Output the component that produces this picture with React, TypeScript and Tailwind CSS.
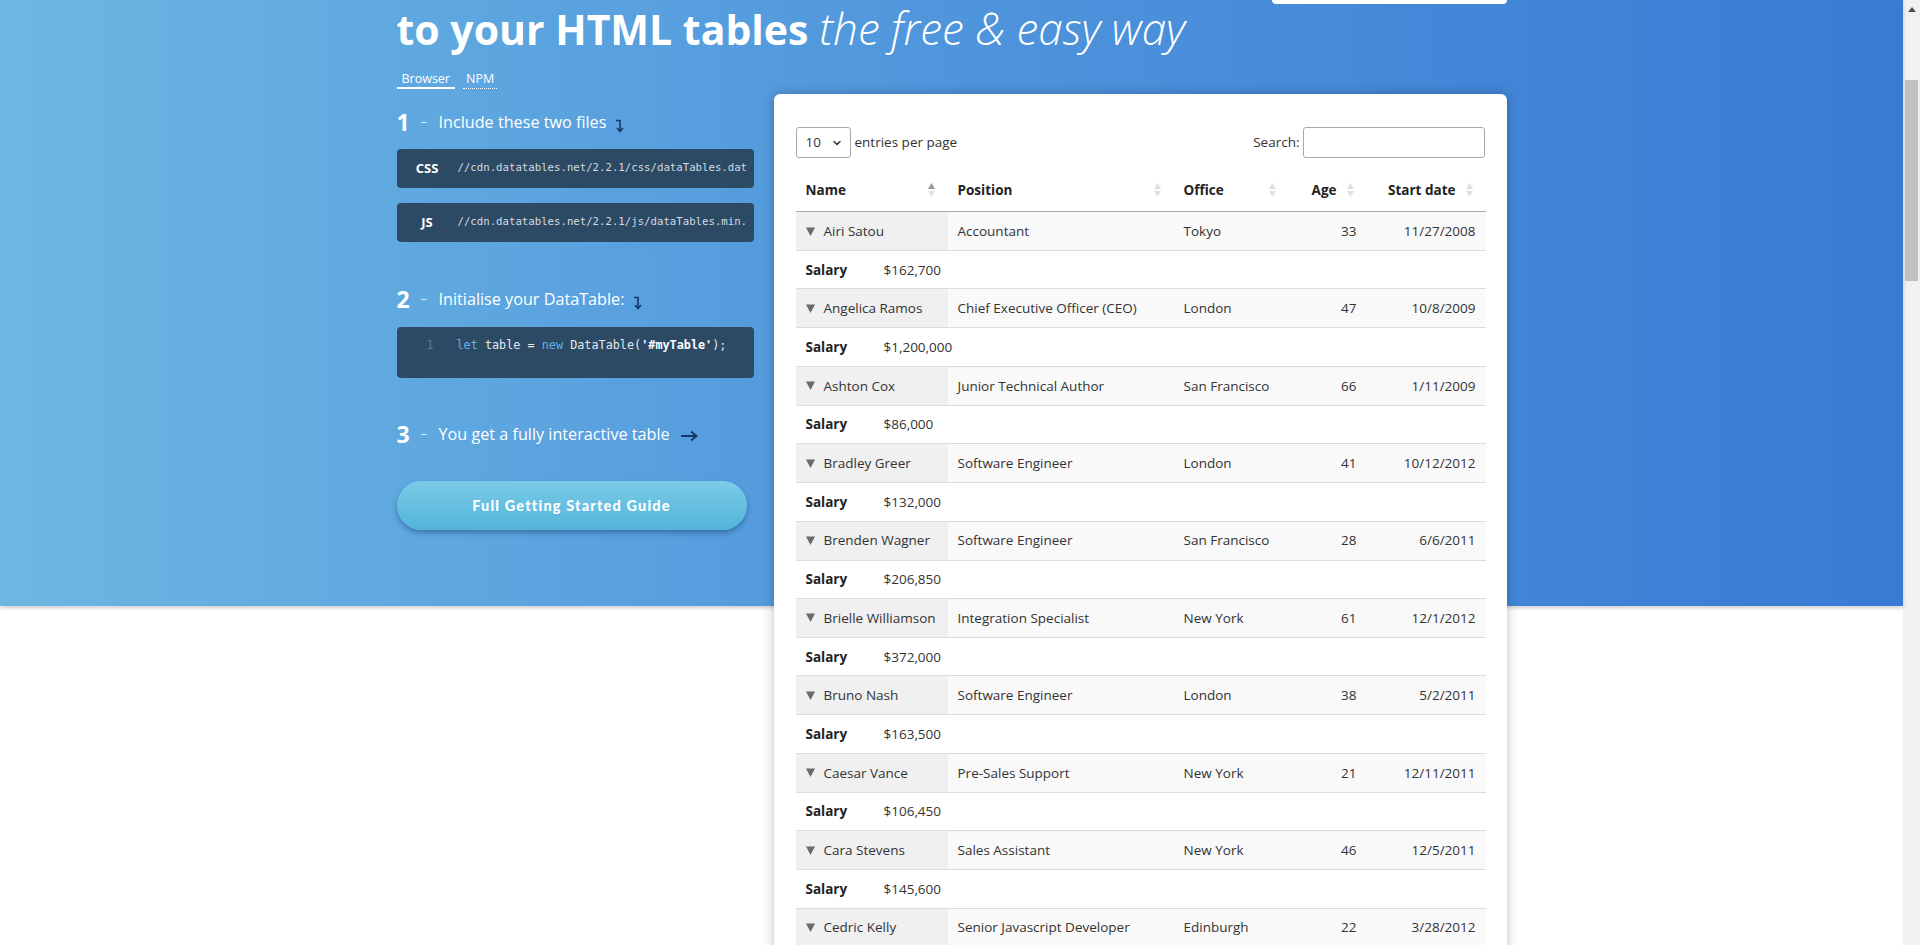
import React from 'react';
import { ChevronDown } from 'lucide-react';

type Person = {
    name: string;
    position: string;
    office: string;
    age: number;
    start: string;
    salary: string;
};

const people: Person[] = [
    { name: 'Airi Satou', position: 'Accountant', office: 'Tokyo', age: 33, start: '11/27/2008', salary: '$162,700' },
    { name: 'Angelica Ramos', position: 'Chief Executive Officer (CEO)', office: 'London', age: 47, start: '10/8/2009', salary: '$1,200,000' },
    { name: 'Ashton Cox', position: 'Junior Technical Author', office: 'San Francisco', age: 66, start: '1/11/2009', salary: '$86,000' },
    { name: 'Bradley Greer', position: 'Software Engineer', office: 'London', age: 41, start: '10/12/2012', salary: '$132,000' },
    { name: 'Brenden Wagner', position: 'Software Engineer', office: 'San Francisco', age: 28, start: '6/6/2011', salary: '$206,850' },
    { name: 'Brielle Williamson', position: 'Integration Specialist', office: 'New York', age: 61, start: '12/1/2012', salary: '$372,000' },
    { name: 'Bruno Nash', position: 'Software Engineer', office: 'London', age: 38, start: '5/2/2011', salary: '$163,500' },
    { name: 'Caesar Vance', position: 'Pre-Sales Support', office: 'New York', age: 21, start: '12/11/2011', salary: '$106,450' },
    { name: 'Cara Stevens', position: 'Sales Assistant', office: 'New York', age: 46, start: '12/5/2011', salary: '$145,600' },
    { name: 'Cedric Kelly', position: 'Senior Javascript Developer', office: 'Edinburgh', age: 22, start: '3/28/2012', salary: '$433,060' },
];

// small stacked triangles used by the sortable headers
const SortIcon: React.FC<{ asc?: boolean }> = ({ asc }) => (
    <span className="absolute right-[13px] top-1/2 -translate-y-1/2 flex flex-col gap-[2px]">
        <svg width="7" height="6" viewBox="0 0 7 6">
            <path d="M3.5 0 L7 6 L0 6 Z" fill={asc ? '#999' : '#e0e0e0'} />
        </svg>
        <svg width="7" height="6" viewBox="0 0 7 6">
            <path d="M0 0 L7 0 L3.5 6 Z" fill="#e0e0e0" />
        </svg>
    </span>
);

const DownArrow: React.FC = () => (
    <svg width="10" height="14" viewBox="0 0 10 14" className="ml-[9px] mt-[8px]">
        <path d="M1 1.5 H5 V12" stroke="#15396b" strokeWidth="1.6" fill="none" />
        <path d="M2 9 L5 12.5 L8 9" stroke="#15396b" strokeWidth="1.6" fill="none" />
    </svg>
);

const RightArrow: React.FC = () => (
    <svg width="18" height="12" viewBox="0 0 18 12" className="ml-[10px] mt-[3px]">
        <path d="M1 6 H16" stroke="#15396b" strokeWidth="2" fill="none" />
        <path d="M11 1.5 L16.5 6 L11 10.5" stroke="#15396b" strokeWidth="2" fill="none" />
    </svg>
);

const Step: React.FC<{ num: string; text: string; arrow: React.ReactNode; className?: string }> = ({ num, text, arrow, className }) => (
    <div className={`flex items-center h-[28px] text-white ${className ?? ''}`}>
        <span className="text-[23px] font-bold w-[24px]">{num}</span>
        <span className="text-[13px] text-white/80 w-[18px]">–</span>
        <span className="text-[16.2px]">{text}</span>
        {arrow}
    </div>
);

const FileBox: React.FC<{ label: string; url: string; className?: string }> = ({ label, url, className }) => (
    <div className={`flex items-center h-[39px] bg-[#2d4a64] rounded-[4px] pr-[8px] overflow-hidden ${className ?? ''}`}>
        <span className="w-[61px] shrink-0 text-center text-[13px] font-bold text-white">{label}</span>
        <span className="whitespace-nowrap text-[10.7px] text-[#d2dae2] font-['DejaVu_Sans_Mono',monospace]">{url}</span>
    </div>
);

export default function App() {
    return (
        <div className="flex h-[945px] overflow-hidden bg-white font-['Open_Sans',sans-serif]">
            <div className="flex-1 relative">
                <div className="h-[606px] bg-gradient-to-r from-[#6cb7e2] via-[#4f95dc] to-[#3a7ad4] shadow-[0_2px_4px_rgba(0,0,0,0.2)]">
                    <div className="w-[1110px] mx-auto flex gap-[20px]">
                        {/* left column */}
                        <div className="w-[357px] shrink-0 flex flex-col">
                            <h1 className="mt-[3px] text-[41px] leading-[50px] font-bold text-white whitespace-nowrap">
                                to your HTML tables{' '}
                                <span className="text-[44px] font-light italic">the free &amp; easy way</span>
                            </h1>
                            <div className="mt-[17px] flex gap-[8px] text-[12.5px] leading-[16px] text-white">
                                <span className="px-[5px] border-b-2 border-white">Browser</span>
                                <span className="px-[3px] border-b border-dotted border-white">NPM</span>
                            </div>
                            <Step className="mt-[19px]" num="1" text="Include these two files" arrow={<DownArrow />} />
                            <FileBox className="mt-[13px]" label="CSS" url="//cdn.datatables.net/2.2.1/css/dataTables.dat" />
                            <FileBox className="mt-[15px]" label="JS" url="//cdn.datatables.net/2.2.1/js/dataTables.min." />
                            <Step className="mt-[43px]" num="2" text="Initialise your DataTable:" arrow={<DownArrow />} />
                            <div className="mt-[14px] h-[51px] bg-[#2d4a64] rounded-[4px] pt-[9px] flex text-[11.8px] leading-[18px] font-['DejaVu_Sans_Mono',monospace]">
                                <span className="w-[60px] pr-[23px] text-right text-[#5d7c95]">1</span>
                                <span className="text-[#e2e8ee] whitespace-pre">
                                    <span className="text-[#62b1f0]">let</span> table = <span className="text-[#62b1f0]">new</span> DataTable(<span className="font-bold text-white">'#myTable'</span>);
                                </span>
                            </div>
                            <Step className="mt-[42px]" num="3" text="You get a fully interactive table" arrow={<RightArrow />} />
                            <button className="mt-[33px] h-[49px] w-[350px] rounded-full bg-gradient-to-b from-[#7acbe8] to-[#52b4da] shadow-[0_3px_5px_rgba(20,60,110,0.45)] text-white text-[14.5px] font-black tracking-[0.08em] font-['Lato',sans-serif]">
                                Full Getting Started Guide
                            </button>
                        </div>

                        {/* right column */}
                        <div className="w-[733px] shrink-0 flex flex-col">
                            <div className="self-end w-[235px] h-[4px] bg-white rounded-b-[6px]" />
                            <div className="mt-[90px] bg-white rounded-[6px] shadow-[0_0_12px_rgba(0,0,0,0.25)] px-[22px] pt-[33px] pb-[30px] text-[13.5px] text-[#333]">
                                <div className="flex items-center justify-between h-[31px]">
                                    <div className="flex items-center gap-[4px]">
                                        <div className="w-[55px] h-[31px] border border-[#aaa] rounded-[3px] flex items-center justify-between pl-[9px] pr-[7px]">
                                            <span>10</span>
                                            <ChevronDown size={12} strokeWidth={3} color="#333" />
                                        </div>
                                        <span>entries per page</span>
                                    </div>
                                    <div className="flex items-center gap-[3px]">
                                        <span>Search:</span>
                                        <div className="w-[182px] h-[31px] border border-[#aaa] rounded-[3px]" />
                                    </div>
                                </div>
                                <table className="mt-[11px] w-full table-fixed border-collapse">
                                    <colgroup>
                                        <col className="w-[152px]" />
                                        <col className="w-[226px]" />
                                        <col className="w-[115px]" />
                                        <col className="w-[78px]" />
                                        <col className="w-[119px]" />
                                    </colgroup>
                                    <thead>
                                        <tr className="border-b border-[#a9a9a9] text-[#222]">
                                            <th className="relative text-left font-bold py-[10px] pl-[10px] pr-[30px] leading-[22px]">Name<SortIcon asc /></th>
                                            <th className="relative text-left font-bold py-[10px] pl-[10px] pr-[30px] leading-[22px]">Position<SortIcon /></th>
                                            <th className="relative text-left font-bold py-[10px] pl-[10px] pr-[30px] leading-[22px]">Office<SortIcon /></th>
                                            <th className="relative text-right font-bold py-[10px] pl-[10px] pr-[30px] leading-[22px]">Age<SortIcon /></th>
                                            <th className="relative text-right font-bold py-[10px] pl-[10px] pr-[30px] leading-[22px] whitespace-nowrap">Start date<SortIcon /></th>
                                        </tr>
                                    </thead>
                                    <tbody>
                                        {people.map((p) => (
                                            <React.Fragment key={p.name}>
                                                <tr className="border-b border-[#dcdcdc] bg-[#f9f9f9]">
                                                    <td className="h-[39px] p-0 pl-[10px] bg-[#f0f0f0] whitespace-nowrap">
                                                        <div className="flex items-center h-[22px]">
                                                            <svg width="9" height="9" viewBox="0 0 9 9" className="mr-[9px]">
                                                                <path d="M0 0.5 L9 0.5 L4.5 9 Z" fill="#6a6a6a" />
                                                            </svg>
                                                            {p.name}
                                                        </div>
                                                    </td>
                                                    <td className="h-[39px] p-0 px-[10px] whitespace-nowrap">{p.position}</td>
                                                    <td className="h-[39px] p-0 px-[10px] whitespace-nowrap">{p.office}</td>
                                                    <td className="h-[39px] p-0 px-[10px] text-right">{p.age}</td>
                                                    <td className="h-[39px] p-0 px-[10px] text-right">{p.start}</td>
                                                </tr>
                                                <tr className="border-b border-[#dcdcdc]">
                                                    <td colSpan={5} className="h-[38.4px] p-0 px-[10px]">
                                                        <div className="flex items-center h-[22px]">
                                                            <span className="w-[78px] font-bold text-[#222]">Salary</span>
                                                            <span>{p.salary}</span>
                                                        </div>
                                                    </td>
                                                </tr>
                                            </React.Fragment>
                                        ))}
                                    </tbody>
                                </table>
                            </div>
                        </div>
                    </div>
                </div>
            </div>

            {/* page scrollbar */}
            <div className="w-[17px] shrink-0 bg-[#f1f1f1] flex flex-col items-center">
                <svg width="8" height="5" viewBox="0 0 8 5" className="mt-[7px]">
                    <path d="M4 0 L8 5 L0 5 Z" fill="#505050" />
                </svg>
                <div className="mt-[68px] w-[13px] h-[201px] bg-[#c1c1c1]" />
            </div>
        </div>
    );
}
